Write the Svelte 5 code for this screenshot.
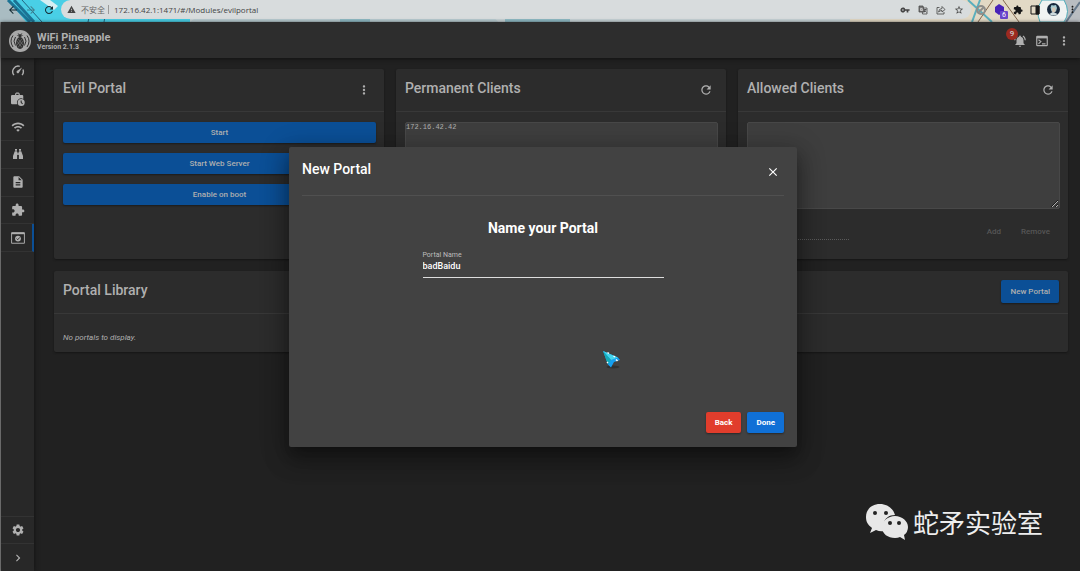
<script lang="ts">
  let portalName = $state("badBaidu");
  let permanentClients = $state("172.16.42.42");
  let allowedClients = $state("");
  let permanentEntry = $state("");
  let allowedEntry = $state("");

  const portalActions = ["Start", "Start Web Server", "Enable on boot"];

  const paths = {
    wifi: "M1 9l2 2c4.97-4.97 13.03-4.97 18 0l2-2C16.93 2.93 7.08 2.93 1 9zm8 8l3 3 3-3c-1.65-1.66-4.34-1.66-6 0zm-4-4l2 2c2.76-2.76 7.24-2.76 10 0l2-2C15.14 9.14 8.87 9.14 5 13z",
    recon: "M6 2h4v3.500H6zM14 2h4v3.500h-4zM5.500 6.500h4.700V22H2v-6zM13.800 6.500h4.700L22 16v6h-8.200zM10.500 9h3v5h-3z",
    file: "M14 2H6c-1.100 0-2 .9-2 2v16c0 1.100.9 2 2 2h12c1.100 0 2-.9 2-2V8l-6-6zm2 16H8v-2h8v2zm0-4H8v-2h8v2zm-3-5V3.500L18.500 9H13z",
    extension: "M20.500 11H19V7c0-1.100-.9-2-2-2h-4V3.500C13 2.120 11.880 1 10.500 1S8 2.120 8 3.500V5H4c-1.100 0-1.990.9-1.990 2v3.800H3.500c1.490 0 2.700 1.210 2.700 2.700s-1.210 2.700-2.700 2.700H2V20c0 1.100.9 2 2 2h3.800v-1.500c0-1.490 1.210-2.700 2.700-2.700s2.700 1.210 2.700 2.700V22H17c1.100 0 2-.9 2-2v-4h1.500c1.380 0 2.500-1.120 2.500-2.500S21.880 11 20.500 11z",
    settings: "M19.140 12.940c.04-.3.06-.61.06-.94 0-.32-.02-.64-.07-.94l2.030-1.580c.18-.14.23-.41.12-.61l-1.920-3.320c-.12-.22-.37-.29-.59-.22l-2.390.96c-.5-.38-1.030-.7-1.620-.94l-.36-2.540c-.04-.24-.24-.41-.48-.41h-3.840c-.24 0-.43.17-.47.41l-.36 2.540c-.59.24-1.130.57-1.620.94l-2.390-.96c-.22-.08-.47 0-.59.22L2.740 8.870c-.12.21-.08.47.12.61l2.030 1.580c-.05.3-.09.63-.09.94s.02.64.07.94l-2.030 1.580c-.18.14-.23.41-.12.61l1.920 3.320c.12.22.37.29.59.22l2.390-.96c.5.38 1.030.7 1.620.94l.36 2.540c.05.24.24.41.48.41h3.840c.24 0 .44-.17.47-.41l.36-2.540c.59-.24 1.130-.56 1.620-.94l2.390.96c.22.08.47 0 .59-.22l1.920-3.320c.12-.22.07-.47-.12-.61l-2.010-1.580zM12 15.600c-1.980 0-3.600-1.620-3.600-3.600s1.620-3.600 3.600-3.600 3.600 1.620 3.600 3.600-1.620 3.600-3.600 3.600z",
    chevron: "M10 6L8.590 7.410 13.170 12l-4.580 4.590L10 18l6-6z",
    close: "M19 6.410L17.590 5 12 10.590 6.410 5 5 6.410 10.590 12 5 17.590 6.410 19 12 13.410 17.590 19 19 17.590 13.410 12z",
    more: "M12 8c1.100 0 2-.9 2-2s-.9-2-2-2-2 .9-2 2 .9 2 2 2zm0 2c-1.100 0-2 .9-2 2s.9 2 2 2 2-.9 2-2-.9-2-2-2zm0 6c-1.100 0-2 .9-2 2s.9 2 2 2 2-.9 2-2-.9-2-2-2z",
    refresh: "M17.650 6.350C16.200 4.900 14.210 4 12 4c-4.420 0-7.990 3.580-7.990 8s3.570 8 7.990 8c3.730 0 6.840-2.550 7.730-6h-2.080c-.82 2.330-3.040 4-5.650 4-3.310 0-6-2.690-6-6s2.690-6 6-6c1.660 0 3.140.69 4.220 1.780L13 11h7V4l-2.350 2.350z",
    bell: "M7.580 4.080L6.150 2.650C3.750 4.480 2.170 7.300 2.030 10.500h2c.15-2.650 1.510-4.970 3.550-6.420zm12.390 6.420h2c-.15-3.200-1.730-6.020-4.120-7.850l-1.420 1.430c2.020 1.450 3.390 3.770 3.540 6.420zM18 11c0-3.070-1.640-5.640-4.500-6.320V4c0-.83-.67-1.500-1.500-1.500s-1.500.67-1.500 1.500v.68C7.630 5.360 6 7.920 6 11v5l-2 2v1h16v-1l-2-2v-5zm-6 11c1.100 0 2-.9 2-2h-4c0 1.100.9 2 2 2z",
    warning: "M1 21h22L12 2 1 21zm12-3h-2v-2h2v2zm0-4h-2v-4h2v4z",
    back: "M20 11H7.830l5.590-5.590L12 4l-8 8 8 8 1.410-1.410L7.830 13H20z",
    forward: "M4 11h12.170l-5.590-5.590L12 4l8 8-8 8-1.410-1.410L16.170 13H4z",
    star: "M22 9.240l-7.190-.62L12 2 9.190 8.630 2 9.240l5.460 4.730L5.820 21 12 17.270 18.180 21l-1.630-7.030zM12 15.400l-3.760 2.270 1-4.280-3.320-2.880 4.380-.38L12 6.100l1.710 4.040 4.380.38-3.320 2.880 1 4.280z",
    key: "M12.650 10A6 6 0 1 0 12.650 14H16v4h4v-4h3v-4zM7 14a2 2 0 1 1 0-4 2 2 0 0 1 0 4z",
  };

  type IconName = keyof typeof paths;
</script>

{#snippet icon(name: IconName, size = 14)}
  <svg width={size} height={size} viewBox="0 0 24 24" fill="currentColor" aria-hidden="true">
    <path d={paths[name]} />
  </svg>
{/snippet}

<div class="window">
  <header class="browser">
    <svg class="theme" viewBox="0 0 1080 22" preserveAspectRatio="none" aria-hidden="true">
      <rect width="1080" height="22" fill="#c7d3d6" />
      <path d="M0 0h190v22H0z" fill="#49cfe6" />
      <path d="M0 0h8l18 22H0z" fill="#a9bcc2" />
      <path d="M40 0h10l8 6-4 4z" fill="#d6eef2" />
      <path d="M8 0l22 22M14 0l20 22" stroke="#1c7394" stroke-width="3" />
      <path d="M22 0l20 22M88 22l5-22M104 22l4-22M212 22l5-5" stroke="#23647f" stroke-width="1" />
      <path d="M190 22l30-22h260l18 22z" fill="#b8cbd0" />
      <path d="M340 22v-4h30v4zM505 22v-4h65v4z" fill="#8fbac4" />
      <path d="M850 0h230v22H850z" fill="#e2d9c5" />
      <path d="M1048 0h32v22h-38z" fill="#b9bdc1" />
      <path d="M968 0l24 22M980 0l-8 22" stroke="#5bafbd" stroke-width="2" />
      <path d="M993 0l-15 22M1003 0l16 22" stroke="#80664e" />
      <path d="M1040 22q-5-12 2-22h22q7 12 0 22z" fill="#f0f3f2" stroke="#4facb9" />
      <path d="M1080 2l-14 20" stroke="#657789" stroke-width="2" />
    </svg>
    <nav class="history" aria-label="History">
      <button type="button" aria-label="Back">{@render icon("back", 12)}</button>
      <button type="button" class="faded" aria-label="Forward">{@render icon("forward", 12)}</button>
      <button type="button" aria-label="Reload">{@render icon("refresh", 12)}</button>
    </nav>
    <div class="address">
      {@render icon("warning", 9)}
      <span class="insecure">不安全</span>
      <span class="divider"></span>
      <span class="url">172.16.42.1:1471/#/Modules/evilportal</span>
      <div class="page-tools">
        <button type="button" aria-label="Passwords">{@render icon("key", 10)}</button>
        <button type="button" aria-label="Translate">
          <svg width="10" height="10" viewBox="0 0 20 20" fill="none" stroke="currentColor" stroke-width="1.500">
            <path d="M8 6h10v12H9z" />
            <path d="M2 2h8l3 12H2z" fill="#777" />
            <path d="M9 7H5v4h4V9H7" stroke="#ddd" />
            <path d="M12 9h5M15 8q0 4-3 6M13 11l4 4" />
          </svg>
        </button>
        <button type="button" aria-label="Share">
          <svg width="10" height="10" viewBox="0 0 20 20" fill="none" stroke="currentColor" stroke-width="1.600">
            <path d="M7 5H2v13h14v-4M5 14q1-7 7-7V3l6 6-6 5v-3q-4 0-7 3z" />
          </svg>
        </button>
        <button type="button" aria-label="Bookmark">{@render icon("star", 10)}</button>
      </div>
    </div>
    <div class="extensions">
      <button type="button" aria-label="Blocked extension">
        <svg width="12" height="12" viewBox="0 0 12 12" fill="none" stroke="#8e8e8b" stroke-width="2">
          <circle cx="6" cy="6" r="4" /><path d="M3 9l6-6" />
        </svg>
      </button>
      <button type="button" class="purple" aria-label="Extension, 6 items">
        <svg width="12" height="14" viewBox="0 0 12 14" aria-hidden="true">
          <path d="M5 1l5 3v5l-5 3-4-3V4z" fill="#4722b8" />
        </svg>
        <span>6</span>
      </button>
      <button type="button" aria-label="Extensions">{@render icon("extension", 10)}</button>
      <button type="button" aria-label="Side panel">
        <svg width="10" height="10" viewBox="0 0 10 10"><path d="M1 1h8v8H1zM6 1h3v8H6z" fill="none" stroke="#171717" stroke-width="1" /><path d="M6 1h3v8H6z" fill="#171717" /></svg>
      </button>
      <button type="button" aria-label="Profile">
        <svg width="13" height="13" viewBox="0 0 26 26">
          <circle cx="13" cy="13" r="13" fill="#17283c" />
          <path d="M7 9l2-5 4 1 5-1 2 6-2 7H9z" fill="#a5cad0" />
          <path d="M10 9h7v8l-4 3-3-3z" fill="#d4c6b5" />
          <path d="M5 22l6-4 4 1 6 3-4 3H9z" fill="#ccdadd" />
        </svg>
      </button>
      <button type="button" aria-label="Browser menu">{@render icon("more", 11)}</button>
    </div>
  </header>

  <div class="app">
    <header class="toolbar">
      <svg class="logo" width="22" height="22" viewBox="0 0 44 44" aria-hidden="true">
        <circle cx="22" cy="22" r="22" fill="#a9a9a9" />
        <g fill="none" stroke="#303030" stroke-width="2">
          <path d="M13 14q-6 8 0 17M8 11q-8 11 0 23M31 14q6 8 0 17M36 11q8 11 0 23" />
        </g>
        <path d="M22 15l-7-5 5 1-3-5 5 3 5-3-3 5 5-1z" fill="#303030" />
        <ellipse cx="22" cy="26" rx="8" ry="12" fill="#303030" />
        <path d="M15 21l11 14M17 17l12 14M29 21L18 35M27 17L15 31" stroke="#929292" />
      </svg>
      <div class="brand">
        <strong>WiFi Pineapple</strong>
        <span>Version 2.1.3</span>
      </div>
      <div class="toolbar-actions">
        <button type="button" class="alerts" aria-label="Notifications">
          {@render icon("bell")}
          <span class="badge">9</span>
        </button>
        <button type="button" aria-label="Terminal">
          <svg width="14" height="14" viewBox="0 0 24 24" fill="none" stroke="currentColor" stroke-width="2">
            <rect x="3" y="4" width="18" height="16" rx="1" /><path d="M3 6h18" stroke-width="3" /><path d="M6 10l4 3-4 4M12 17h6" />
          </svg>
        </button>
        <button type="button" aria-label="Menu">{@render icon("more")}</button>
      </div>
    </header>

    <div class="body">
      <nav class="sidebar" aria-label="Main">
        <div class="links">
          <a href="#/Dashboard" aria-label="Dashboard">
            <svg width="14" height="14" viewBox="0 0 24 24" fill="none" stroke="currentColor" stroke-width="2.400">
              <path d="M5 19A9.500 9.500 0 0 1 15 4M19 19a9.500 9.500 0 0 0 1.500-9.500" />
              <path d="M19 6l-5.500 9a2.200 2.200 0 0 1-3.500-2.800z" fill="currentColor" stroke="none" />
            </svg>
          </a>
          <a href="#/Campaigns" aria-label="Campaigns">
            <svg width="14" height="14" viewBox="0 0 24 24" fill="currentColor">
              <path d="M7 5V3l2-2h4l2 2v2h4q2 0 2 2v5a7 7 0 0 0-10 9H2q-2 0-2-2V7q0-2 2-2zm2 0h4V3H9z" />
              <path fill-rule="evenodd" d="M17.500 12a6 6 0 1 0 0 12 6 6 0 0 0 0-12zm-1 2.500h1.800v3l2.200 2.200-1.300 1.300-2.700-2.800z" />
            </svg>
          </a>
          <a href="#/PineAP" aria-label="PineAP">{@render icon("wifi")}</a>
          <a href="#/Recon" aria-label="Recon">{@render icon("recon", 12)}</a>
          <a href="#/Logging" aria-label="Logging">{@render icon("file")}</a>
          <a href="#/Modules" aria-label="Modules">{@render icon("extension")}</a>
          <a href="#/Modules/evilportal" class="active" aria-label="Evil Portal">
            <svg width="14" height="14" viewBox="0 0 24 24" fill="none" stroke="currentColor" stroke-width="1.600">
              <path d="M1 3h22v18H1z" /><path d="M1 4h22" stroke-width="3" />
              <circle cx="12" cy="13" r="5" fill="currentColor" stroke="none" />
              <path d="M9.500 13l2 2 3.500-4" stroke="#282828" />
            </svg>
          </a>
        </div>
        <div class="links bottom">
          <a href="#/Settings" aria-label="Settings">{@render icon("settings")}</a>
          <button type="button" aria-label="Expand sidebar">{@render icon("chevron")}</button>
        </div>
      </nav>

      <main>
        <section class="card">
          <div class="card-header">
            <h2>Evil Portal</h2>
            <button type="button" class="icon-button" aria-label="Evil Portal options">{@render icon("more")}</button>
          </div>
          <div class="card-body actions">
            {#each portalActions as action}
              <button type="button" class="button">{action}</button>
            {/each}
          </div>
        </section>

        <section class="card">
          <div class="card-header">
            <h2>Permanent Clients</h2>
            <button type="button" class="icon-button" aria-label="Refresh permanent clients">{@render icon("refresh")}</button>
          </div>
          <div class="card-body">
            <textarea aria-label="Permanent Clients" bind:value={permanentClients}></textarea>
            <div class="client-form">
              <input aria-label="Permanent client address" bind:value={permanentEntry} disabled />
              <button type="button" disabled>Add</button>
              <button type="button" disabled>Remove</button>
            </div>
          </div>
        </section>

        <section class="card">
          <div class="card-header">
            <h2>Allowed Clients</h2>
            <button type="button" class="icon-button" aria-label="Refresh allowed clients">{@render icon("refresh")}</button>
          </div>
          <div class="card-body">
            <textarea aria-label="Allowed Clients" bind:value={allowedClients}></textarea>
            <div class="client-form">
              <input aria-label="Allowed client address" bind:value={allowedEntry} disabled />
              <button type="button" disabled>Add</button>
              <button type="button" disabled>Remove</button>
            </div>
          </div>
        </section>

        <section class="card library">
          <div class="card-header">
            <h2>Portal Library</h2>
            <button type="button" class="button">New Portal</button>
          </div>
          <p>No portals to display.</p>
        </section>
      </main>
    </div>

    <div class="overlay">
      <div class="dialog" role="dialog" aria-modal="true" aria-labelledby="dialog-title">
        <div class="dialog-header">
          <h2 id="dialog-title">New Portal</h2>
          <button type="button" class="icon-button" aria-label="Close">{@render icon("close")}</button>
        </div>
        <div class="dialog-body">
          <h3>Name your Portal</h3>
          <div class="field">
            <label for="portal-name">Portal Name</label>
            <input id="portal-name" bind:value={portalName} />
          </div>
        </div>
        <div class="dialog-actions">
          <button type="button" class="button danger">Back</button>
          <button type="button" class="button primary">Done</button>
        </div>
      </div>
    </div>
  </div>

  <svg class="cursor" width="20" height="20" viewBox="0 0 40 40" aria-hidden="true">
    <ellipse cx="22" cy="34" rx="13" ry="3" fill="#252525" opacity=".6" />
    <path d="M2 2l30 13 4 5-12 4-6 11-6-6z" fill="#159ff0" />
    <path d="M2 2l30 13-14 5z" fill="#45d5ed" />
    <path d="M2 2l10 27 6-9z" fill="#14aab5" />
    <path d="M11 5l3 2M10 24l2 2M28 19l3 3M23 12l3 2" stroke="#fff" stroke-width="3" />
  </svg>

  <div class="watermark">
    <svg width="44" height="38" viewBox="0 0 44 38" aria-hidden="true">
      <path d="M15 1C6 1 1 7 1 14c0 5 2 8 6 11l-2 5 6-3q4 2 9 1C16 17 23 12 30 12 28 5 22 1 15 1z" fill="#e7e7e7" />
      <path d="M30 13c-7 0-13 5-13 11 0 7 6 11 13 11q3 0 5-1l5 3-1-5q4-3 4-8c0-6-6-11-13-11z" fill="#e7e7e7" />
      <g fill="#222"><circle cx="10" cy="10" r="2" /><circle cx="21" cy="10" r="2" /><circle cx="25" cy="20" r="2" /><circle cx="34" cy="20" r="2" /></g>
    </svg>
    <span>蛇矛实验室</span>
  </div>
</div>

<style>
  :global(body) {
    margin: 0;
    background: #212121;
  }

  .window {
    --text: #b0b0b0;
    --panel: #2c2c2c;
    --line: #383838;
    position: relative;
    min-height: 100vh;
    display: flex;
    flex-direction: column;
    overflow: hidden;
    color: var(--text);
    font-family: Roboto, "Noto Sans CJK SC", sans-serif;
    font-size: 8px;
  }

  .window * {
    box-sizing: border-box;
  }

  button, input, textarea {
    margin: 0;
    padding: 0;
    border: 0;
    background: transparent;
    color: inherit;
    font: inherit;
  }

  button, a {
    display: flex;
    align-items: center;
    justify-content: center;
    color: inherit;
  }

  svg {
    display: block;
    flex: none;
  }

  h2, h3, p {
    margin: 0;
  }

  .browser {
    position: relative;
    display: flex;
    height: 22px;
    padding-bottom: 3px;
    color: #444;
  }

  .theme {
    position: absolute;
    inset: 0;
    width: 100%;
    height: 100%;
  }

  .history {
    position: relative;
    display: flex;
    gap: 6px;
    width: 61px;
    padding-left: 7px;
    color: #152b33;
  }

  .faded {
    color: #41818f;
  }

  .address {
    position: relative;
    flex: 1;
    display: flex;
    align-items: center;
    padding: 0 7px 0 6px;
    border-radius: 10px;
    background: #d8dcdd;
  }

  .insecure {
    margin-left: 5px;
    color: #666;
  }

  .divider {
    height: 9px;
    margin: 0 5px 0 3px;
    border-left: 1px solid #999;
  }

  .url {
    font-family: "Open Sans", sans-serif;
  }

  .page-tools {
    display: flex;
    gap: 8px;
    margin-left: auto;
  }

  .extensions {
    position: relative;
    display: flex;
    align-items: center;
    gap: 7px;
    padding: 0 2px 0 4px;
    color: #161616;
  }

  .purple {
    position: relative;
  }

  .purple span {
    position: absolute;
    right: -2px;
    bottom: -2px;
    width: 8px;
    border-radius: 1px;
    background: #6a47cb;
    color: #fff;
    font-size: 7px;
    line-height: 8px;
  }

  .app {
    position: relative;
    flex: 1;
    display: flex;
    flex-direction: column;
    border-left: 1px solid #858585;
    background: #212121;
  }

  .toolbar {
    z-index: 1;
    display: flex;
    align-items: center;
    height: 36px;
    padding: 2px 9px 0 8px;
    background: #2d2d2d;
    box-shadow: 0 1px 4px #111;
  }

  .brand {
    display: flex;
    flex-direction: column;
    gap: 1px;
    margin-left: 6px;
  }

  .brand strong {
    font-size: 11px;
    font-weight: 700;
    line-height: 11px;
  }

  .brand span {
    font-size: 7px;
    font-weight: 700;
    line-height: 7px;
  }

  .toolbar-actions {
    display: flex;
    gap: 8px;
    margin-left: auto;
  }

  .alerts {
    position: relative;
  }

  .badge {
    position: absolute;
    left: -7px;
    top: -6px;
    width: 12px;
    border-radius: 50%;
    background: #9c2a20;
    color: #ccc;
    font-weight: 500;
    line-height: 12px;
  }

  .body {
    flex: 1;
    display: flex;
  }

  .sidebar {
    width: 33px;
    display: flex;
    flex-direction: column;
    justify-content: space-between;
    background: #282828;
    box-shadow: 1px 0 4px #151515;
  }

  .links {
    height: 194px;
    display: grid;
    grid-auto-rows: 1fr;
  }

  .links a {
    border-bottom: 1px solid #333;
  }

  .links .active {
    border-right: 2px solid #0b4f96;
    padding-left: 2px;
  }

  .bottom {
    height: 55px;
    border-top: 1px solid #333;
  }

  main {
    flex: 1;
    display: grid;
    grid-template-columns: repeat(3, minmax(0, 1fr));
    grid-template-rows: 190px auto;
    align-content: start;
    gap: 12px;
    padding: 11px 12px 12px 20px;
  }

  .card {
    border-radius: 2px;
    background: var(--panel);
    box-shadow: 0 1px 2px #161616;
  }

  .card-header {
    display: flex;
    align-items: center;
    justify-content: space-between;
    height: 43px;
    padding: 0 9px;
    border-bottom: 1px solid var(--line);
  }

  h2, h3 {
    font-size: 14px;
    font-weight: 500;
    line-height: 18px;
  }

  .card-header h2 {
    padding-bottom: 5px;
  }

  .icon-button {
    width: 22px;
    height: 22px;
  }

  .card-body {
    padding: 10px 8px 10px 9px;
  }

  .actions {
    display: grid;
    gap: 10px;
  }

  .button {
    height: 21px;
    padding: 0 9px;
    border-radius: 2px;
    background: #0b4f96;
    box-shadow: 0 1px 2px #0006;
    font-weight: 500;
  }

  textarea {
    display: block;
    width: 100%;
    height: 87px;
    border: 1px solid #484848;
    border-radius: 2px;
    background: #3e3e3e;
    font-family: "Liberation Mono", monospace;
    font-size: 7px;
    line-height: 9px;
  }

  .client-form {
    display: flex;
    align-items: flex-end;
    height: 31px;
  }

  .client-form input {
    width: 102px;
    height: 18px;
    margin-right: auto;
    border-bottom: 1px dotted #5a5a5a;
  }

  .client-form button {
    height: 18px;
    padding: 0 10px;
    color: #565656;
    font-weight: 500;
  }

  .library {
    grid-column: 1 / -1;
  }

  .library .button {
    height: 23px;
    margin-bottom: 2px;
  }

  .library p {
    padding: 19px 9px 9px;
    font-style: italic;
    line-height: 10px;
  }

  .overlay {
    position: absolute;
    inset: 0;
    z-index: 2;
    display: grid;
    place-items: center;
    padding-left: 5px;
  }

  .dialog {
    width: 47.3%;
    min-height: 300px;
    display: flex;
    flex-direction: column;
    padding: 13px 13px 14px;
    border-radius: 2px;
    background: #424242;
    color: #fff;
    box-shadow: 0 6px 9px -4px #0003, 0 13px 22px 2px #0004, 0 5px 26px 5px #0003;
  }

  .dialog-header {
    display: flex;
    justify-content: space-between;
    height: 36px;
    border-bottom: 1px solid #505050;
  }

  .dialog-header .icon-button {
    margin-top: 1px;
  }

  .dialog-body {
    flex: 1;
    display: flex;
    flex-direction: column;
    align-items: center;
    gap: 14px;
    padding-top: 23px;
  }

  h3 {
    font-weight: 700;
  }

  .field {
    width: 50%;
    display: flex;
    flex-direction: column;
  }

  .field label {
    color: #bdbdbd;
    font-size: 7px;
    line-height: 8px;
  }

  .field input {
    height: 19px;
    padding-bottom: 4px;
    border-bottom: 1px solid #ddd;
    border-radius: 0;
    font-size: 9px;
    font-weight: 500;
  }

  .dialog-actions {
    display: flex;
    justify-content: flex-end;
    gap: 6px;
  }

  .danger {
    background: #e13d2c;
    font-weight: 700;
  }

  .primary {
    background: #1070d6;
    font-weight: 700;
  }

  .cursor {
    position: absolute;
    left: 602px;
    top: 350px;
    z-index: 3;
  }

  .watermark {
    position: absolute;
    right: 37px;
    bottom: 30px;
    display: flex;
    align-items: center;
    gap: 4px;
    color: #eee;
    font-family: "Noto Sans CJK SC", sans-serif;
    font-size: 26px;
    line-height: 38px;
  }
</style>
